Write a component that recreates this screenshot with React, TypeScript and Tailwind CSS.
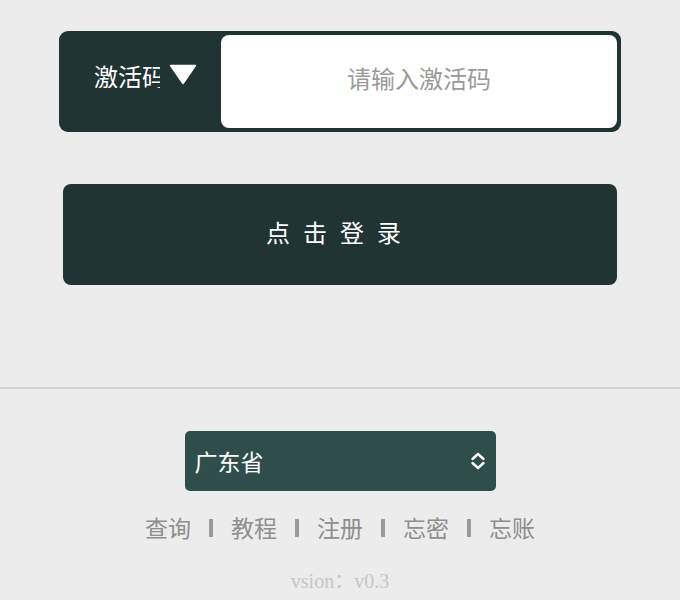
const cjk = "font-['Noto_Sans_CJK_SC','Noto_Sans',sans-serif]";

function Caret() {
  return (
    <svg width="28" height="21" viewBox="0 0 28 21" className="shrink-0">
      <path d="M1.5 1.5 L26.5 1.5 L14 19.5 Z" fill="#ffffff" stroke="#ffffff" strokeWidth="1.5" strokeLinejoin="round" />
    </svg>
  );
}

function UpDown() {
  return (
    <svg width="16" height="18" viewBox="0 0 16 18" fill="none" stroke="#ffffff" strokeWidth="2.4" strokeLinecap="round" strokeLinejoin="round">
      <path d="M2.5 7 L8 2 L13.5 7" />
      <path d="M2.5 11 L8 16 L13.5 11" />
    </svg>
  );
}

const links = ['查询', '教程', '注册', '忘密', '忘账'];

export default function App() {
  return (
    <div className={`w-[680px] h-[600px] overflow-hidden bg-[#ececec] flex flex-col items-center ${cjk}`}>
      {/* activation code */}
      <div className="mt-[31px] w-[562px] h-[101px] flex bg-[#203434] rounded-[9px] p-[4px] pl-0">
        <div className="w-[162px] flex items-center pl-[35px] pb-[12px]">
          <span className="w-[66px] overflow-hidden whitespace-nowrap text-[24px] leading-none text-white">激活码</span>
          <span className="ml-[9px] mt-[-2px]"><Caret /></span>
        </div>
        <div className="flex-1 bg-white rounded-[8px] flex items-center justify-center pb-[8px]">
          <span className="text-[24px] leading-none text-[#9a9a9a]">请输入激活码</span>
        </div>
      </div>

      {/* login button */}
      <button className="mt-[52px] w-[554px] h-[101px] bg-[#203434] rounded-[8px] flex items-center justify-center pb-[5px]">
        <span className="text-[24px] leading-none text-white tracking-[13px]">点击登录</span>
      </button>

      <div className="mt-[102px] w-full border-t-2 border-[#d2d2d2]" />

      {/* province select */}
      <div className="mt-[42px] w-[311px] h-[60px] bg-[#2f4e4b] rounded-[5px] flex items-center justify-between pl-[10px] pr-[10px]">
        <span className="text-[23px] leading-none text-white">广东省</span>
        <UpDown />
      </div>

      {/* links */}
      <div className="mt-[25px] flex items-center text-[23px] leading-none text-[#8e8e8e]">
        {links.map((l, i) => (
          <div key={l} className="flex items-center">
            {i > 0 && <span className="mx-[18px] w-[4px] h-[18px] bg-[#9a9a9a]" />}
            <span>{l}</span>
          </div>
        ))}
      </div>

      <div className="mt-[32px] font-['Liberation_Serif','Noto_Sans_CJK_SC',serif] text-[20px] leading-none text-[#c6c6c6]">
        vsion：v0.3
      </div>
    </div>
  );
}
